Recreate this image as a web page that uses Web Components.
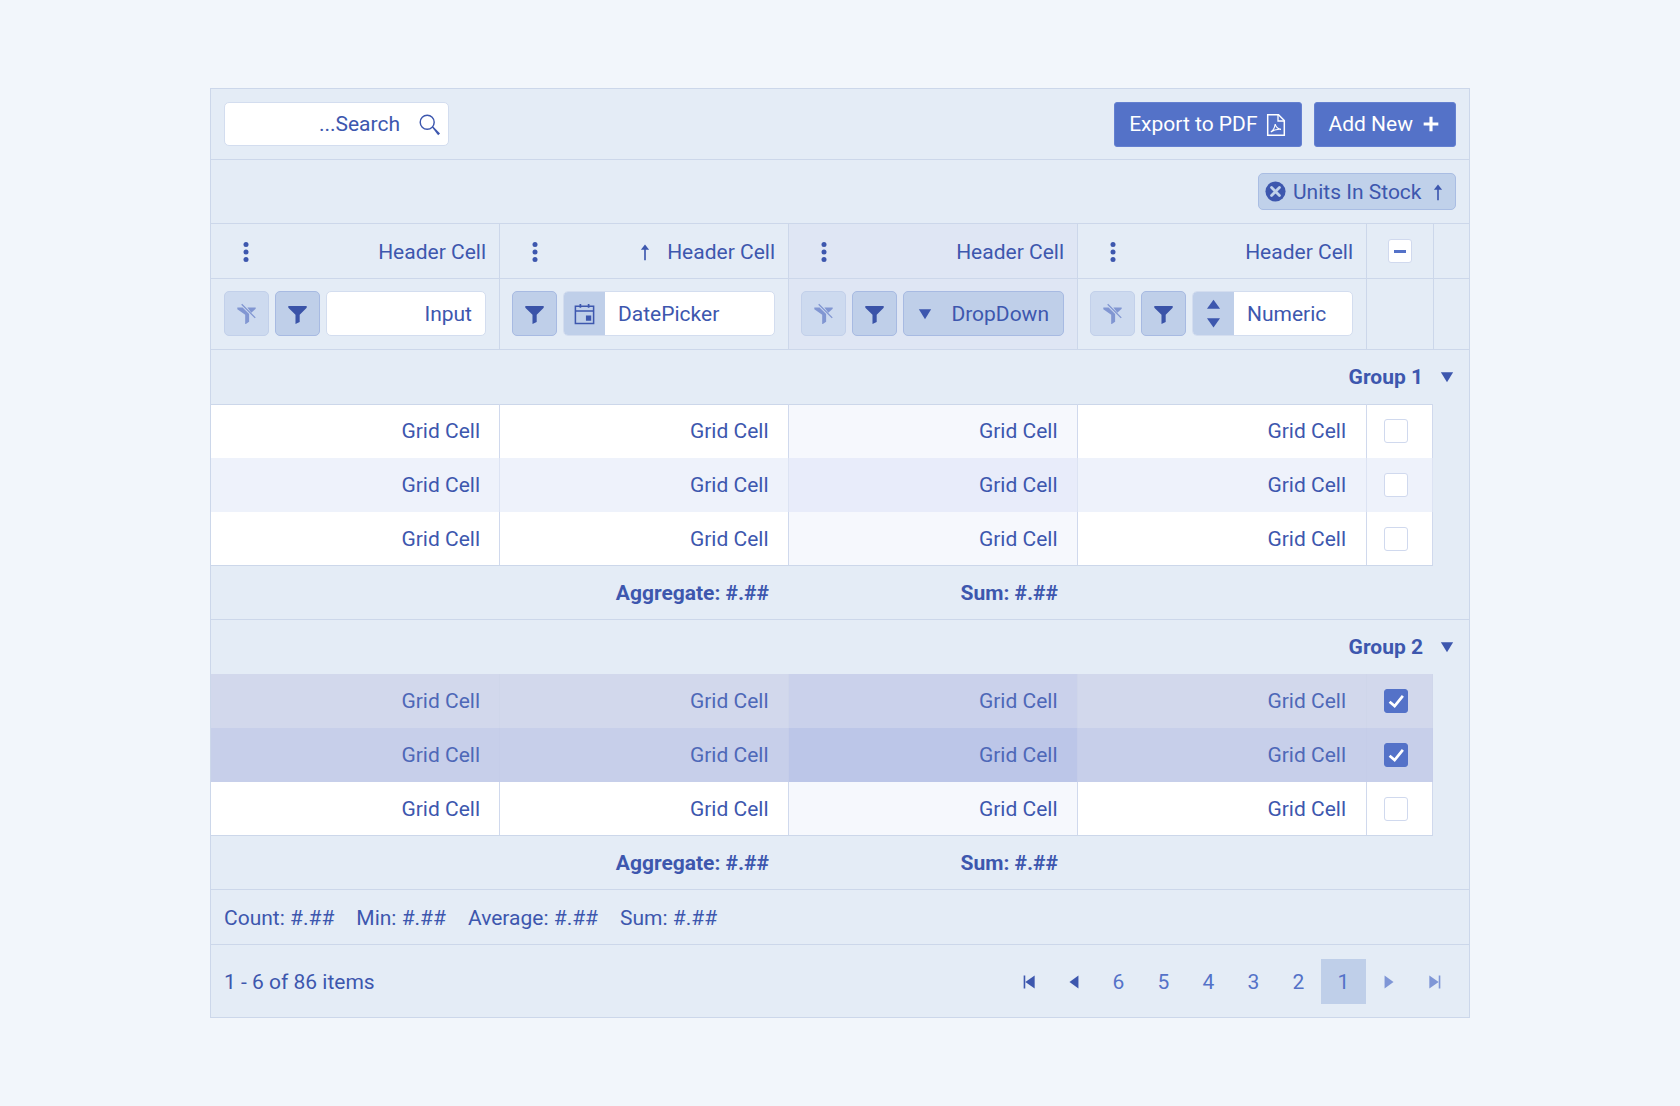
<!DOCTYPE html>
<html lang="en">
<head>
<meta charset="utf-8">
<title>Grid</title>
<style>
  html,body{margin:0;padding:0;background:#f2f6fb;}
  body{font:21px/24px Roboto,"Liberation Sans",sans-serif;color:#3d57ae;min-height:1106px;box-sizing:border-box;padding:88px 210px 0;}
</style>
</head>
<body>
<grid-app></grid-app>
<script>
const ICONS={
 search:'<circle cx="9.6" cy="9.6" r="7.3" fill="none" stroke="currentColor" stroke-width="1.5"/><path d="M14.600 14.800l1-1 7.400 7.500-2 2z" fill="currentColor"/>',
 pdf:'<path d="M3.700 2.700h10.800l5.800 5.800v14.800H3.700z" fill="none" stroke="currentColor" stroke-width="1.500"/><path d="M14 2.700v6.300h6" fill="none" stroke="currentColor" stroke-width="1.300"/><path d="M6.800 20c2.200-1.200 3.800-4 4.400-7.800.7 2.800 2.300 4.800 5.800 5.200-3.200-.3-7.500.6-10.200 2.600z" fill="none" stroke="currentColor" stroke-width="1.100"/>',
 plus:'<path d="M10.300 4h3.400v6.300H20v3.400h-6.300V20h-3.400v-6.300H4v-3.400h6.300z" fill="currentColor"/>',
 xcircle:'<circle cx="12" cy="12" r="11.500" fill="currentColor"/><path d="M7.500 7.500l9 9M16.500 7.500l-9 9" stroke="#c0d1ea" stroke-width="3.200" stroke-linecap="round"/>',
 up:'<path d="M12 2l5.500 7h-4.400v14h-2.200V9H6.500z" fill="currentColor"/>',
 kebab:'<circle cx="12" cy="4.500" r="2.500" fill="currentColor"/><circle cx="12" cy="12" r="2.500" fill="currentColor"/><circle cx="12" cy="19.500" r="2.500" fill="currentColor"/>',
 filter:'<path d="M1.500 3.500h21v1.800l-8 8v8.500L9.700 24V13.300l-8.200-8z" fill="currentColor"/>',
 clear:'<path d="M1.500 5h6l7.500 7.500v9l-4.500 3V13.500L1.500 7z" fill="currentColor"/><path d="M13 5h9.500v1.500l-5 4.700z" fill="currentColor"/><path d="M6.500 1.500L22 17" stroke="currentColor" stroke-width="1.500" fill="none"/>',
 cal:'<path d="M2.500 4.500h19v18h-19zM2.500 9.500h19" fill="none" stroke="currentColor" stroke-width="1.600"/><path d="M6.800 2h1.800v4H6.800zM15.400 2h1.800v4h-1.800zM13.500 14h5.500v5.500h-5.500z" fill="currentColor"/>',
 down:'<path d="M1.500 4h21L12 21z" fill="currentColor"/>',
 upTri:'<path d="M1.500 20h21L12 3z" fill="currentColor"/>',
 check:'<path d="M5 12.800l5.500 4.700L19.500 6.500" fill="none" stroke="currentColor" stroke-width="3"/>',
 first:'<path d="M2.500 2.200h2.400v19.600H2.500zM19 2.200v19.600L5 12z" fill="currentColor"/>',
 prev:'<path d="M18.700 2.200v19.600L5.200 12z" fill="currentColor"/>',
 next:'<path d="M5.300 2.200v19.600L18.800 12z" fill="currentColor"/>',
 last:'<path d="M5 2.200v19.600L19 12zM19.100 2.200h2.400v19.600h-2.400z" fill="currentColor"/>'
};
function def(name,css,html){
  customElements.define(name,class extends HTMLElement{
    connectedCallback(){
      if(this.shadowRoot)return;
      const a={};for(const at of this.attributes)a[at.name]=at.value;
      this.attachShadow({mode:'open'}).innerHTML='<style>'+css+'</style>'+(typeof html==='function'?html(a):html);
    }
  });
}
def('x-icon',':host{display:inline-flex;line-height:0;flex:none}svg{display:block}',a=>{
  const s=a.size||24;
  return `<svg xmlns="http://www.w3.org/2000/svg" width="${s}" height="${a.h||s}" viewBox="0 0 24 24" preserveAspectRatio="none">${ICONS[a.name]}</svg>`;
});
def('search-box',`
  :host{display:flex;align-items:center;width:225px;height:44px;box-sizing:border-box;background:#fff;border:1px solid #d3ddef;border-radius:5px;color:#3d57ae;padding:0 7px 0 0}
  .t{flex:1;text-align:right;padding-right:18px}
`,`<span class="t">...Search</span><x-icon name="search" size="23"></x-icon>`);
def('ui-button',`
  :host{display:inline-flex;align-items:center;height:45px;box-sizing:border-box;background:#5472c8;border:1px solid #6480d0;border-radius:3px;color:#fff;padding:0 var(--pr,13px) 0 14px;gap:var(--g,7px)}
  ::slotted(x-icon){color:#fff}
`,`<slot></slot><slot name="icon"></slot>`);
def('grid-toolbar',`
  :host{display:flex;align-items:center;height:71px;box-sizing:border-box;padding:0 13px;border-bottom:1px solid #ccd7ea;gap:12px}
  .sp{flex:1}
  .e{--g:6px;--pr:13px}
`,`<search-box></search-box><span class="sp"></span>
  <ui-button class="e"><span>Export to PDF</span><x-icon slot="icon" name="pdf" size="24"></x-icon></ui-button>
  <ui-button><span>Add New</span><x-icon slot="icon" name="plus" size="22"></x-icon></ui-button>`);
def('sort-chip',`
  :host{display:inline-flex;align-items:center;height:37px;width:198px;box-sizing:border-box;background:#c0d1ea;border:1px solid #a9bde3;border-radius:5px;color:#3d57ae;padding:0 8px 0 6px}
  x-icon.x{margin-right:7px}
  .t{flex:1;white-space:nowrap}
`,`<x-icon class="x" name="xcircle" size="21"></x-icon><span class="t">Units In Stock</span><x-icon name="up" size="18"></x-icon>`);
def('group-bar',`
  :host{display:flex;justify-content:flex-end;align-items:center;height:64px;box-sizing:border-box;padding:0 13px;border-bottom:1px solid #ccd7ea}
`,`<sort-chip></sort-chip>`);
def('head-cell',`
  :host{display:flex;align-items:center;box-sizing:border-box;border-right:1px solid #ccd7ea;padding:1px 13px 0 12px;white-space:nowrap}
  :host([tint]){background:#dfe6f4}
  .k{width:45px;display:flex;justify-content:center}
  .s{margin-left:auto;margin-right:13px;display:flex}
  .l{margin-left:auto}
  .s + .l{margin-left:0}
`,a=>`<span class="k"><x-icon name="kebab" size="24"></x-icon></span>${a.sorted!==undefined?'<span class="s"><x-icon name="up" size="18"></x-icon></span>':''}<span class="l">Header Cell</span>`);
def('check-box',`
  :host{display:inline-flex;align-items:center;justify-content:center;width:24px;height:24px;box-sizing:border-box;background:#fff;border:1px solid #d0d9ee;border-radius:3px;color:#5472c8;flex:none}
  :host([on]){background:#5472c8;border-color:#5472c8;color:#fff}
`,a=>a.on!==undefined?'<x-icon name="check" size="22"></x-icon>':(a.mixed!==undefined?'<span style="display:block;width:12px;height:3px;background:currentColor"></span>':''));
def('grid-head',`
  :host{display:grid;grid-template-columns:289px 289px 289px 289px 67px 35px;height:55px;box-sizing:border-box;border-bottom:1px solid #ccd7ea}
  .c{display:flex;align-items:center;justify-content:center;border-right:1px solid #ccd7ea;box-sizing:border-box;padding-right:1px}
`,`<head-cell></head-cell><head-cell sorted></head-cell><head-cell tint></head-cell><head-cell></head-cell>
   <div class="c"><check-box mixed></check-box></div><div></div>`);
def('tool-btn',`
  :host{display:inline-flex;align-items:center;justify-content:center;width:45px;height:45px;box-sizing:border-box;border-radius:5px;flex:none;background:#bfcfe9;border:1px solid #a7bae2;color:#3a53a8;padding-right:1px}
  :host([dim]){background:#cddaef;border-color:#c2d0ea;color:#8196d2}
`,a=>`<x-icon name="${a.icon}" size="21"></x-icon>`);
def('text-field',`
  :host{flex:1;display:flex;align-items:stretch;height:45px;box-sizing:border-box;background:#fff;border:1px solid #d3ddef;border-radius:5px;overflow:hidden;min-width:0;color:#3d57ae}
  .t{flex:1;display:flex;align-items:center;padding:0 13px 0 13px}
  :host([end]) .t{justify-content:flex-end}
  .a{width:41px;flex:none;background:#bfcfe9;display:flex;flex-direction:column;align-items:center;justify-content:center;gap:5px}
`,a=>{
  let add='';
  if(a.kind==='cal')add='<span class="a"><x-icon name="cal" size="23"></x-icon></span>';
  if(a.kind==='num')add='<span class="a"><x-icon name="upTri" size="15" h="13"></x-icon><x-icon name="down" size="15" h="13"></x-icon></span>';
  return add+`<span class="t">${a.label}</span>`;
});
def('drop-down',`
  :host{flex:1;display:flex;align-items:center;height:45px;box-sizing:border-box;background:#bfcfe9;border:1px solid #a7bae2;border-radius:5px;color:#3d57ae;padding:0 14px}
  .t{margin-left:auto}
`,`<x-icon name="down" size="14"></x-icon><span class="t">DropDown</span>`);
def('filter-cell',`
  :host{display:flex;align-items:flex-start;gap:6px;box-sizing:border-box;border-right:1px solid #ccd7ea;padding:12px 13px 0 13px}
  :host([tint]){background:#dfe6f4}
  :host([nl]){padding-left:12px}
`,`<slot></slot>`);
def('grid-filter',`
  :host{display:grid;grid-template-columns:289px 289px 289px 289px 67px 35px;height:71px;box-sizing:border-box;border-bottom:1px solid #ccd7ea}
  .c{border-right:1px solid #ccd7ea}
`,`<filter-cell><tool-btn dim icon="clear"></tool-btn><tool-btn icon="filter"></tool-btn><text-field end label="Input"></text-field></filter-cell>
   <filter-cell nl><tool-btn icon="filter"></tool-btn><text-field kind="cal" label="DatePicker"></text-field></filter-cell>
   <filter-cell nl tint><tool-btn dim icon="clear"></tool-btn><tool-btn icon="filter"></tool-btn><drop-down></drop-down></filter-cell>
   <filter-cell nl><tool-btn dim icon="clear"></tool-btn><tool-btn icon="filter"></tool-btn><text-field kind="num" label="Numeric"></text-field></filter-cell>
   <div class="c"></div><div></div>`);
def('group-row',`
  :host{display:flex;align-items:center;justify-content:flex-end;height:54px;box-sizing:border-box;padding-right:15px;font-weight:700;color:#3d57ae}
  x-icon{margin-left:17px}
`,a=>`<span>${a.label}</span><x-icon name="down" size="14"></x-icon>`);
def('data-row',`
  :host{display:grid;grid-template-columns:289px 289px 289px 289px 66px;height:var(--rh,54px);box-sizing:border-box;width:1222px;--b:#d0d9ed;--a:#fff;--s:#f6f8fd;color:#3d57ae}
  :host([state=alt]){--a:#eef2fb;--s:#e8ecfa;--b:#dce3f3}
  :host([state=sel]){--a:#d2d8ec;--s:#cad1eb;--b:#cfd6ea;color:#4e68b8}
  :host([state=selalt]){--a:#c7cfea;--s:#bcc6e8;--b:#c5cde9;color:#4e68b8}
  :host([last]){--rh:53px}
  .c{display:flex;align-items:center;justify-content:flex-end;box-sizing:border-box;padding-right:19px;background:var(--a);border-right:1px solid var(--b)}
  .c.m{padding-right:19.5px}
  .c.e{padding-right:20px}
  :host([top]) .c{box-shadow:inset 0 1px 0 #ccd7ea}
  .c.s{background:var(--s)}
  .b{justify-content:flex-start;padding:0 0 0 17px}
`,a=>{
  const cell=s=>`<div class="c ${s||''}">Grid Cell</div>`;
  return cell()+cell('m')+cell('m s')+cell('e')+`<div class="c b"><check-box ${a.checked!==undefined?'on':''}></check-box></div>`;
});
def('data-block',`
  :host{display:block;width:1222px;box-sizing:border-box;height:162px;border-bottom:1px solid #ccd7ea}
`,`<slot></slot>`);
def('foot-row',`
  :host{display:grid;grid-template-columns:578px 289px;height:54px;box-sizing:border-box;border-bottom:1px solid #ccd7ea;font-weight:700;color:#3d57ae;align-items:center}
  span{text-align:right}
  .a{padding-right:20px}.b{padding-right:20px}
`,`<span class="a">Aggregate: #.##</span><span class="b">Sum: #.##</span>`);
def('total-row',`
  :host{display:flex;align-items:center;height:55px;box-sizing:border-box;border-bottom:1px solid #ccd7ea;padding:2px 0 0 13px;gap:22px;color:#3d57ae}
`,`<span>Count: #.##</span><span>Min: #.##</span><span>Average: #.##</span><span>Sum: #.##</span>`);
def('page-btn',`
  :host{display:inline-flex;align-items:center;justify-content:center;width:45px;height:45px;box-sizing:border-box;padding-top:1px;color:#5472c8}
  :host([active]){background:#bfcfe9}
  :host([solid]){color:#3d57ae}
  :host([off]){color:#7f96d6}
  :host([nudge]){padding-left:3px}
`,`<slot></slot>`);
def('pager-bar',`
  :host{display:flex;align-items:center;height:72px;box-sizing:border-box;padding:0 13px;color:#3d57ae}
  .i{flex:1;padding-top:1px}
`,`<span class="i">1 - 6 of 86 items</span>
  <page-btn solid nudge><x-icon name="first" size="16"></x-icon></page-btn>
  <page-btn solid><x-icon name="prev" size="16"></x-icon></page-btn>
  <page-btn>6</page-btn><page-btn>5</page-btn><page-btn>4</page-btn><page-btn>3</page-btn><page-btn>2</page-btn>
  <page-btn active>1</page-btn>
  <page-btn off><x-icon name="next" size="16"></x-icon></page-btn>
  <page-btn off><x-icon name="last" size="16"></x-icon></page-btn>`);
def('grid-app',`
  :host{display:block;width:1260px;box-sizing:border-box;background:#e4ecf6;border:1px solid #ccd7ea;font:21px/24px Roboto,"Liberation Sans",sans-serif}
`,`<grid-toolbar></grid-toolbar><group-bar></group-bar><grid-head></grid-head><grid-filter></grid-filter>
  <group-row label="Group 1"></group-row>
  <data-block><data-row top></data-row><data-row state="alt"></data-row><data-row last></data-row></data-block>
  <foot-row></foot-row>
  <group-row label="Group 2"></group-row>
  <data-block><data-row state="sel" checked></data-row><data-row state="selalt" checked></data-row><data-row last></data-row></data-block>
  <foot-row></foot-row>
  <total-row></total-row>
  <pager-bar></pager-bar>`);
</script>
</body>
</html>
